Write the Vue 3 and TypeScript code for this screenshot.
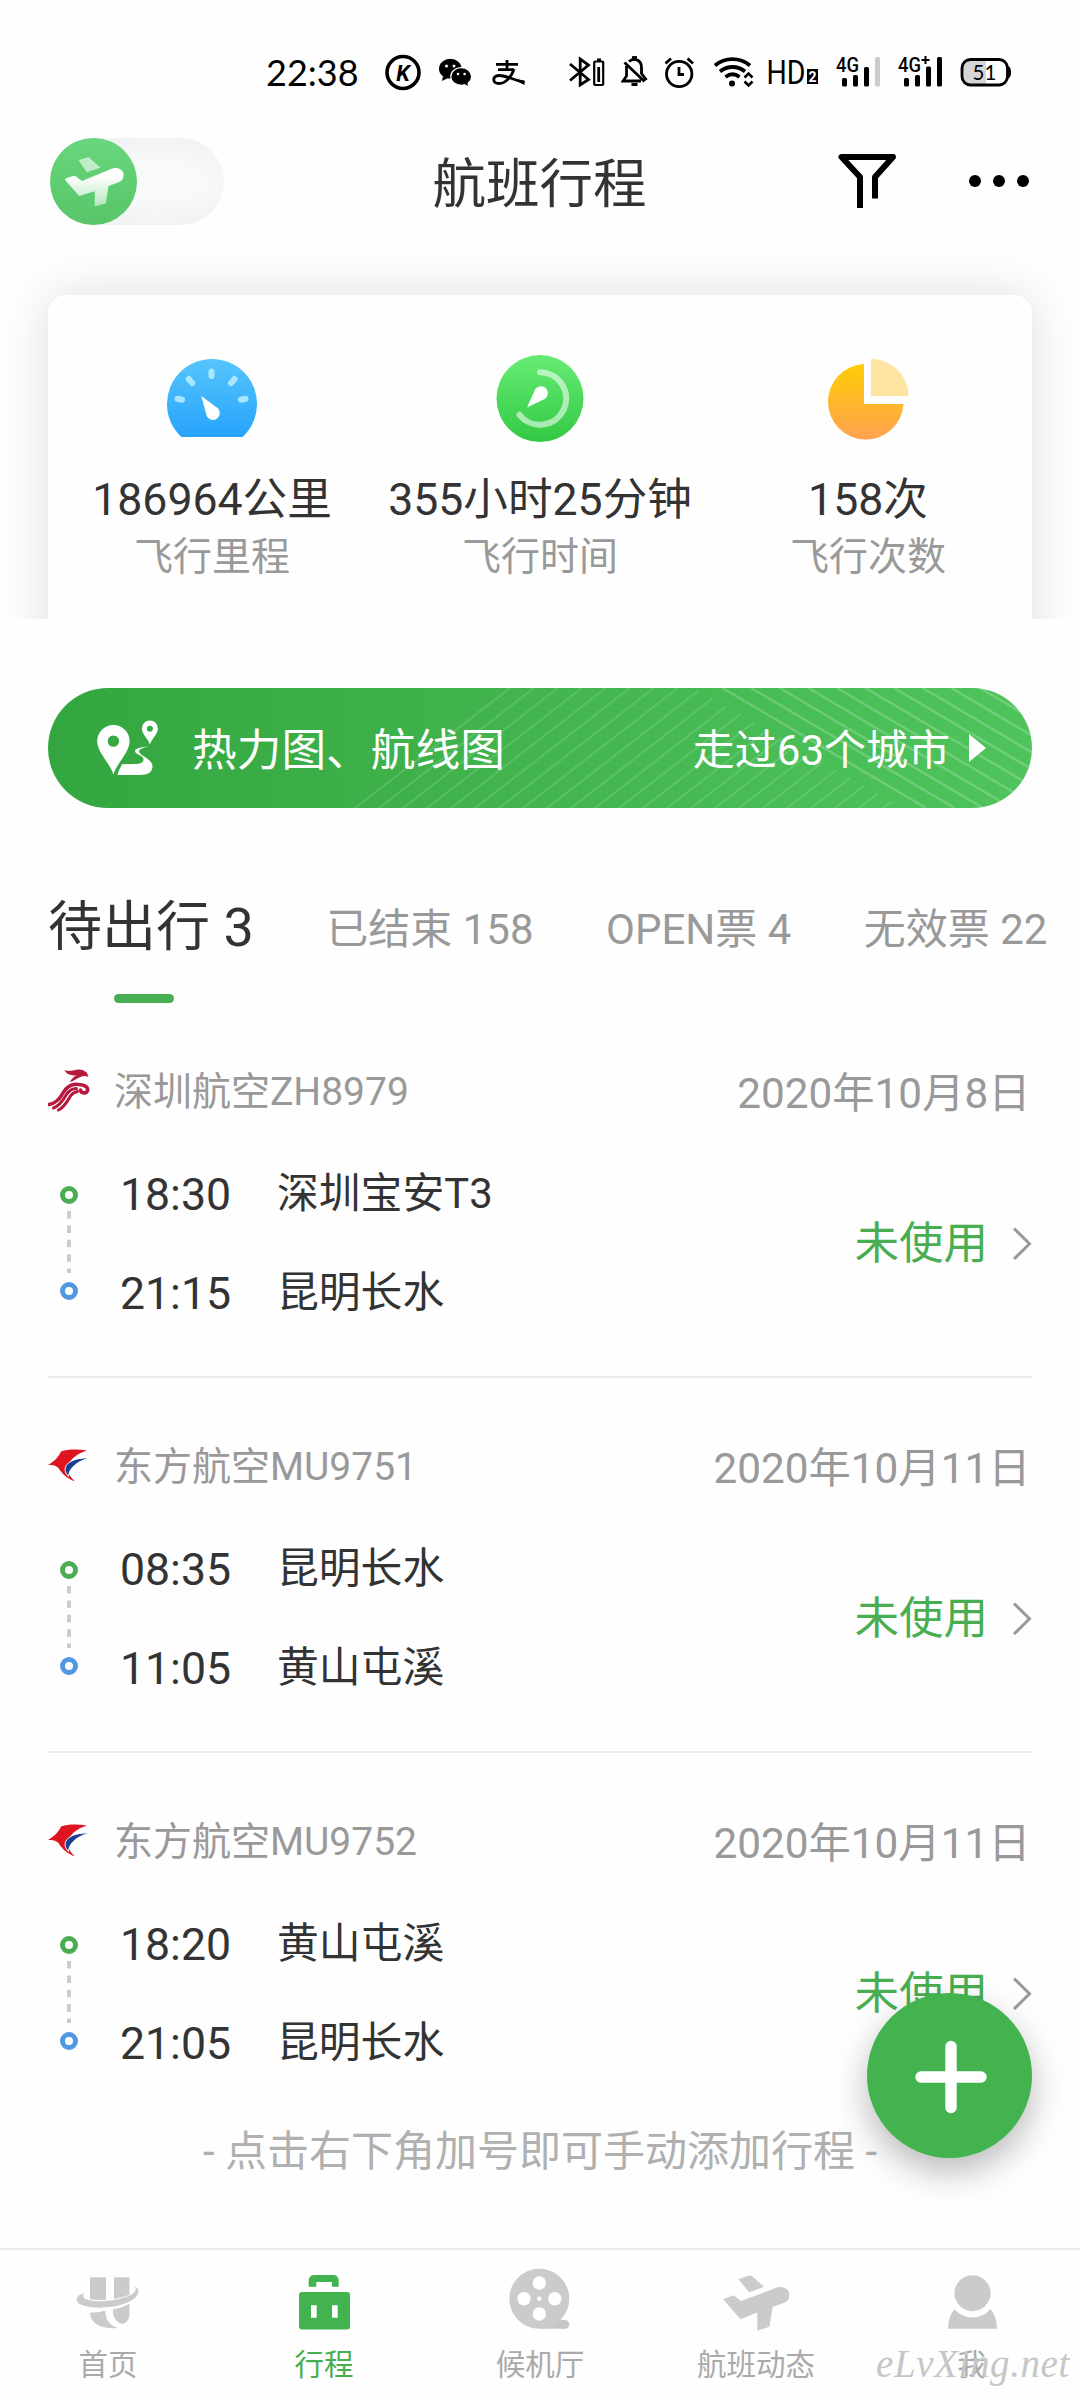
<script setup lang="ts">
interface Stat { kind: 'distance' | 'time' | 'count'; value: string; label: string }
interface Tab { name: string; count: number }
interface Stop { time: string; airport: string }
interface Flight { logo: 'zh' | 'mu'; title: string; date: string; from: Stop; to: Stop }
interface NavItem { id: string; label: string }

const stats: Stat[] = [
  { kind: 'distance', value: '186964公里', label: '飞行里程' },
  { kind: 'time', value: '355小时25分钟', label: '飞行时间' },
  { kind: 'count', value: '158次', label: '飞行次数' },
]

const tabs: Tab[] = [
  { name: '待出行', count: 3 },
  { name: '已结束', count: 158 },
  { name: 'OPEN票', count: 4 },
  { name: '无效票', count: 22 },
]

const flights: Flight[] = [
  {
    logo: 'zh', title: '深圳航空ZH8979', date: '2020年10月8日',
    from: { time: '18:30', airport: '深圳宝安T3' }, to: { time: '21:15', airport: '昆明长水' },
  },
  {
    logo: 'mu', title: '东方航空MU9751', date: '2020年10月11日',
    from: { time: '08:35', airport: '昆明长水' }, to: { time: '11:05', airport: '黄山屯溪' },
  },
  {
    logo: 'mu', title: '东方航空MU9752', date: '2020年10月11日',
    from: { time: '18:20', airport: '黄山屯溪' }, to: { time: '21:05', airport: '昆明长水' },
  },
]

const nav: NavItem[] = [
  { id: 'home', label: '首页' },
  { id: 'trip', label: '行程' },
  { id: 'lounge', label: '候机厅' },
  { id: 'status', label: '航班动态' },
  { id: 'me', label: '我' },
]

const risingLines = Array.from({ length: 24 }, (_, i) => 355 + i * 24)
const fallingLines = Array.from({ length: 11 }, (_, i) => 722.5 + i * 28.6)
</script>

<template>
  <div class="page">
    <div class="status">
      <span class="clock">22:38</span>
      <svg class="s-k" width="36" height="40" viewBox="385 52 36 40">
        <circle cx="403" cy="72.5" r="16" fill="none" stroke="#000" stroke-width="3.6" />
        <text x="403" y="80.5" text-anchor="middle" font-family="Roboto, sans-serif" font-size="22" font-weight="700" font-style="italic">K</text>
      </svg>
      <svg class="s-wx" width="34" height="40" viewBox="438 52 34 40">
        <path d="M443 76l-1 5 6-3z" />
        <ellipse cx="450.3" cy="68.8" rx="11.3" ry="10" />
        <ellipse cx="461.2" cy="76.5" rx="11" ry="9.4" fill="#fff" />
        <ellipse cx="461.2" cy="76.5" rx="9.8" ry="8.3" />
        <path d="M463 83l5 3-1-5z" />
        <g fill="#fff"><circle cx="446.5" cy="66" r="1.5" /><circle cx="454" cy="66" r="1.5" /><circle cx="458" cy="74" r="1.3" /><circle cx="464.6" cy="74" r="1.3" /></g>
      </svg>
      <svg class="s-ali" width="36" height="40" viewBox="490 52 36 40" fill="none" stroke="#000">
        <path d="M496 64.3h22M507 60v10M498 69.7h16" stroke-width="2.8" />
        <path d="M514 69c-2 7-8 14.500-15 14.500c-7 0-7-7.500 0-8 6-.3 15 4.500 25.500 7" stroke-width="2.800" />
        <path d="M512 78.500l12.500 2v4.500z" fill="#000" stroke="none" />
      </svg>
      <svg class="s-bt" width="36" height="40" viewBox="569 52 36 40" fill="none" stroke="#000" stroke-width="2.8">
        <path d="M570 64l18.500 15.500-8.300 5.500V59l8.300 6L570 80.500" />
        <rect x="594.2" y="61.500" width="9" height="23.500" rx="1" stroke-width="2.200" />
        <path d="M597 60h4M598.700 67v15" stroke-width="2.800" />
      </svg>
      <svg class="s-bell" width="27" height="40" viewBox="621 52 27 40" fill="none" stroke="#000" stroke-width="2.8">
        <path d="M629 61.500c4-3.800 12.500-2.500 12.500 6v6l5 6.500M626.500 66v10l-3.500 5h18M624.500 62.500l20 19" />
        <path d="M632 57.500h5" /><path d="M631.500 84.500h6" stroke-width="3" />
      </svg>
      <svg class="s-alarm" width="30" height="40" viewBox="664 52 30 40" fill="none" stroke="#000" stroke-width="2.8">
        <circle cx="679.200" cy="74" r="12.700" /><path d="M679 67v7.500h5M665.500 63.500l5.500-5M693 63.500l-5.500-5" />
      </svg>
      <svg class="s-wifi" width="42" height="40" viewBox="713 52 42 40" fill="none" stroke="#000" stroke-width="3.8">
        <path d="M715 65.500c10-8.500 25-8.500 35 0M720 71.500c7.500-6 17.500-6 25 0M725.500 77c4.500-3.500 9.500-3.500 14 0" />
        <circle cx="732" cy="83.500" r="3" fill="#000" stroke="none" />
        <path d="M744.500 77.500l4-4 4 4M744.500 81.500l4 4 4-4" stroke-width="2.500" />
      </svg>
      <svg class="s-hd" width="52" height="40" viewBox="767 52 52 40">
        <text x="766.500" y="84" font-family="Roboto, sans-serif" font-size="33.500" textLength="39" lengthAdjust="spacingAndGlyphs">HD</text>
        <rect x="807" y="69" width="11" height="15" />
        <text x="812.500" y="81.500" fill="#fff" text-anchor="middle" font-family="Roboto, sans-serif" font-size="14" font-weight="700">2</text>
      </svg>
      <svg class="s-sig" width="46" height="40" viewBox="835 52 46 40">
        <text x="836" y="72" font-family="Roboto, sans-serif" font-size="20.500" font-weight="500" textLength="23" lengthAdjust="spacingAndGlyphs">4G</text>
        <rect x="842" y="78" width="5" height="8.500" rx="1.500" /><rect x="853" y="75" width="5" height="11.500" rx="1.500" /><rect x="864" y="67" width="5" height="19.500" rx="1.500" /><rect x="875" y="57" width="5" height="29.500" rx="1.500" fill="#ccc" />
      </svg>
      <svg class="s-sig2" width="46" height="40" viewBox="897 52 46 40">
        <text x="898" y="72" font-family="Roboto, sans-serif" font-size="20.500" font-weight="500" textLength="23" lengthAdjust="spacingAndGlyphs">4G</text>
        <path d="M921.500 60h8M925.500 56v8" stroke="#000" stroke-width="2" />
        <rect x="904" y="78" width="5" height="8.500" rx="1.500" /><rect x="915" y="75" width="5" height="11.500" rx="1.500" /><rect x="926" y="66.500" width="5" height="20" rx="1.500" /><rect x="937" y="57" width="5" height="29.500" rx="1.500" />
      </svg>
      <svg class="s-bat" width="52" height="40" viewBox="960 52 52 40">
        <path d="M970 60.500h16v24h-16q-8 0-8-8v-8q0-8 8-8z" fill="#d5d5d5" />
        <rect x="962" y="59.500" width="45.500" height="25.500" rx="8.500" fill="none" stroke="#000" stroke-width="2.800" />
        <path d="M1008 66q3 1 3 6.300t-3 6.300z" />
        <text x="984.500" y="79.500" text-anchor="middle" font-family="Lato, sans-serif" font-size="20.500">51</text>
      </svg>
    </div>

    <header class="header">
      <div class="toggle">
        <div class="knob">
          <svg width="87" height="87" viewBox="50 137 87 87">
            <defs><linearGradient id="planeFill" x1="0" y1="0" x2="0" y2="1"><stop offset=".2" stop-color="#fff" /><stop offset="1" stop-color="#fff" stop-opacity=".55" /></linearGradient></defs>
            <path d="M78.600 159.300l9.900-3.300 12.100 10.700-13.800 4.600z" fill="#fff" fill-opacity=".6" />
            <path d="M65 179l.8-1.700 8.200-2.500 1.800.4 6.200 4.800 29-12c6-2.500 12 .5 12.500 5 .4 4-1.500 7-4 8l-11 4-2.500 16.500-1 1.200-10.300 2.600v-15l-15.500 4.700z" fill="url(#planeFill)" />
          </svg>
        </div>
      </div>
      <h1 class="title">航班行程</h1>
      <div class="actions">
        <svg width="60" height="60" viewBox="835 151 60 60" fill="none" stroke="#000" stroke-width="6" stroke-linejoin="round">
          <path d="M858 208v-31L839.500 157h51.500L873 177v21.500" />
        </svg>
        <svg width="62" height="14" viewBox="966 174 62 14"><circle cx="973" cy="181" r="6" /><circle cx="997" cy="181" r="6" /><circle cx="1021" cy="181" r="6" /></svg>
      </div>
    </header>

    <section class="summary">
      <div class="card">
        <div v-for="s in stats" :key="s.kind" class="stat">
          <svg v-if="s.kind === 'distance'" width="90" height="90" viewBox="167 354 90 90">
            <defs><linearGradient id="blue" x1="0" y1="0" x2="0" y2="1"><stop offset="0" stop-color="#56c5fc" /><stop offset="1" stop-color="#27a3fb" /></linearGradient></defs>
            <path d="M181.400 437A45 45 0 1 1 242.600 437z" fill="url(#blue)" />
            <path d="M211.500 371.500v4.500M188.700 379l3.500 4M234.500 379l-3.500 4M177.500 398.800l4.500 1M245.500 398.800l-4.500 1" stroke="#a9e6ff" stroke-width="6" stroke-linecap="round" />
            <path d="M201.300 396l15.500 11.500a6.800 6.800 0 1 1-10.600 6.500z" fill="#fff" />
          </svg>
          <svg v-else-if="s.kind === 'time'" width="90" height="90" viewBox="495 354 90 90">
            <defs><linearGradient id="green" x1="0" y1="0" x2="0" y2="1"><stop offset="0" stop-color="#66ec75" /><stop offset="1" stop-color="#33c943" /></linearGradient></defs>
            <circle cx="540" cy="398.600" r="43.500" fill="url(#green)" />
            <path d="M540 372.300a26.200 26.200 0 1 1-20.500 42.500" fill="none" stroke="#fff" stroke-opacity=".56" stroke-width="6" stroke-linecap="round" />
            <path d="M527 407.500l7-15.500a7 7 0 1 1 8.500 8z" fill="#fff" />
          </svg>
          <svg v-else width="90" height="90" viewBox="823 354 90 90">
            <defs><linearGradient id="amber" x1="0" y1="0" x2="0" y2="1"><stop offset="0" stop-color="#ffcd05" /><stop offset="1" stop-color="#ffa250" /></linearGradient></defs>
            <path d="M864 364v40h39.500A37.800 37.800 0 1 1 864 364z" fill="url(#amber)" />
            <path d="M871 358.700v37.600h37.700A38 38 0 0 0 871 358.700z" fill="#ffe5a3" />
          </svg>
          <div class="value">{{ s.value }}</div>
          <div class="label">{{ s.label }}</div>
        </div>
      </div>
    </section>

    <section class="banner">
      <svg class="pattern" width="984" height="120" viewBox="48 688 984 120" fill="none" stroke="#fff">
        <defs><clipPath id="leftZone"><path d="M48 688H695L902 808H48z" /></clipPath></defs>
        <g clip-path="url(#leftZone)" stroke-width="2.200" stroke-opacity=".13">
          <path v-for="x in risingLines" :key="x" :d="`M${x} 808l155-120`" />
        </g>
        <g stroke-width="2.400" stroke-opacity=".2">
          <path v-for="x in fallingLines" :key="x" :d="`M${x} 688l203.500 120`" />
        </g>
      </svg>
      <svg class="route" width="64" height="60" viewBox="96 718 64 60" fill="#fff">
        <path fill-rule="evenodd" d="M113.400 774.500c-3-11-16.200-22-16.200-33.300a16.200 16.200 0 0 1 32.400 0c0 11.300-13.200 22.300-16.200 33.300zM113.400 735.400a5.700 5.700 0 1 0 0 11.400 5.700 5.700 0 0 0 0-11.400z" />
        <path fill-rule="evenodd" d="M149.900 744.500c-1.500-5.500-8-10-8-16a8 8 0 0 1 16 0c0 6-6.500 10.500-8 16zM149.900 725.700a3 3 0 1 0 0 6 3 3 0 0 0 0-6z" />
        <path d="M149 746.500c-8 .3-14 2-14 4.500 0 3.500 9.500 4.500 8.500 9-.5 3-4 4-8 4l-13.500.3c-2 3.500-3.500 7-4.500 10.700h22c9 0 13-3.500 13-8.500 0-8-13.500-11-13.500-15 0-2.500 5-4 10-5z" />
      </svg>
      <span class="banner-title">热力图、航线图</span>
      <span class="cities">走过63个城市</span>
      <i class="play"></i>
    </section>

    <nav class="tabs">
      <span v-for="(t, i) in tabs" :key="t.name" :class="['tab', { active: i === 0 }]">{{ t.name }} {{ t.count }}</span>
    </nav>
    <div class="indicator"></div>

    <main class="list">
      <article v-for="f in flights" :key="f.title" class="flight">
        <div class="flight-head">
          <svg v-if="f.logo === 'zh'" class="logo" width="42" height="44" viewBox="49 1069 42 44">
            <g fill="none" stroke="#b5183c" stroke-linecap="round">
              <path d="M50 1104.500c7-1 11-6 14-11.500 4-7 9-9.500 16-8.500 6 .500 9.500 3 8.500 6-1 3.500-6.500 3-7-.5" stroke-width="3.600" />
              <path d="M54.500 1108c7-2.500 10-8.500 13-13.500 2.500-4 5.500-6 10-6" stroke-width="3" />
              <path d="M59.500 1110c6-3 9-9 12-14 2-3 4-4 7-4.500" stroke-width="3" />
            </g>
            <path d="M65.500 1070c5 2.500 10-.7 15-.6 4 .2 5.500 2.200 7.500 3.300l1.500 4.300c-2.500-1.300-5-1-7.500-.2-4 1.300-7 4.200-11 5.200 1-3 3.500-5 6.500-6.800-5 .8-10.500-1-12-5.200z" fill="#b5183c" />
          </svg>
          <svg v-else class="logo" width="42" height="44" viewBox="48 1443 42 44">
            <path d="M87 1449.500c-9-1.500-19-1.500-26 1-2 4.500-6 9.500-13 13.500 5-.5 8 .5 10.500 3 3 5 8 10.500 16.500 13.500-5-5-7.500-9-7-13.500 1-8 8-14 19-17.500z" fill="#de1420" />
            <path d="M89.500 1457c-9-.5-18.500 1.500-22.500 6.500-3 3.500-2.500 8 1.500 12 .5-8 8-15 21-18.500z" fill="#1c3f94" stroke="#fff" stroke-width="1" />
          </svg>
          <span class="flight-name">{{ f.title }}</span>
          <span class="date">{{ f.date }}</span>
        </div>
        <div class="flight-body">
          <svg class="track" width="18" height="198" viewBox="60 1145 18 198" fill="none">
            <circle cx="69" cy="1195" r="6.500" stroke="#4aad54" stroke-width="5" />
            <path d="M69 1211v62" stroke="#ccc" stroke-width="4" stroke-dasharray="7.500 6.900" />
            <circle cx="69" cy="1291" r="6.500" stroke="#5198e2" stroke-width="5" />
          </svg>
          <div class="stops">
            <div class="stop"><span class="time">{{ f.from.time }}</span><span class="airport">{{ f.from.airport }}</span></div>
            <div class="stop"><span class="time">{{ f.to.time }}</span><span class="airport">{{ f.to.airport }}</span></div>
          </div>
          <span class="state">未使用</span>
          <svg class="chevron" width="20" height="34" viewBox="1013 1226 20 34" fill="none" stroke="#999" stroke-width="3"><path d="M1015 1227.500l15.500 15.300L1015 1258" /></svg>
        </div>
      </article>
    </main>
    <p class="hint">- 点击右下角加号即可手动添加行程 -</p>

    <footer class="bottom">
      <div v-for="n in nav" :key="n.id" :class="['nav-item', { on: n.id === 'trip' }]">
        <svg v-if="n.id === 'home'" width="72" height="64" viewBox="72 2267 72 64">
          <path d="M90 2277.300h16v22.500q-8 .8-16-.5zM114 2277.300h15.500v17.500q-7 3.200-15.500 4.200z" />
          <path d="M84.500 2293.300c-10 2-10.500 9-2 12 18 6 54 0 56-13.500.3-3-1.500-4.500-4-5.300 2.500 3 1 6-5 9-13 6-35 7.500-44 3.500-3-1.500-3-4-1-5.700z" />
          <path d="M90 2312.800q8 0 15.500-2.100c-.5 7 3 14 12 17.300-14 1.500-27-3-27.500-15.200zM113 2309.500q9-1.500 16.500-6v10.500q-.5 9-7.500 10c-6-2-9.500-7-9-14.500z" />
        </svg>
        <svg v-else-if="n.id === 'trip'" width="72" height="64" viewBox="288 2267 72 64">
          <path d="M308.700 2286.700v-6q0-5.700 6-5.700h18q6 0 6 5.700v6H332v-4.700h-15.700v4.700z" />
          <path fill-rule="evenodd" d="M302 2292h45q3 0 3 3v31.500q0 3-3 3h-45q-3 0-3-3V2295q0-3 3-3zM311 2305.300v12.400h5.700v-12.400zM332 2305.300v12.400h5.700v-12.400z" />
        </svg>
        <svg v-else-if="n.id === 'lounge'" width="72" height="64" viewBox="504 2267 72 64">
          <path d="M540 2320h25a4.300 4.300 0 0 1 0 8.700h-25z" fill="#c6c6ca" />
          <circle cx="539.300" cy="2298.700" r="30" />
          <g fill="#fff"><circle cx="524" cy="2298.700" r="6.700" /><circle cx="554.800" cy="2298.700" r="6.700" /><circle cx="539.300" cy="2283" r="6.700" /><circle cx="539.300" cy="2314" r="6.700" /><circle cx="539.300" cy="2298.700" r="2.300" /></g>
        </svg>
        <svg v-else-if="n.id === 'status'" width="72" height="64" viewBox="720 2267 72 64">
          <path d="M738.300 2279.300l9.700-3.300q2.500-1 4 .3l12 10.400-14.600 5.600z" />
          <path d="M723.200 2299.300l10.300-4 7.500 5.700 36-13.500c6-2 12 1.500 12.300 6.500.2 4.500-1.500 7-4.500 8.500l-12 4.500-3.500 19.700-12 4v-18.200l-16.800 6.800z" />
        </svg>
        <svg v-else width="72" height="64" viewBox="936 2267 72 64">
          <circle cx="972.500" cy="2293.200" r="18" />
          <path d="M954.500 2309q7 8.500 18 8.500t18-8.500q6.500 8 6.500 19.700h-49q0-11.700 6.500-19.700z" />
        </svg>
        <span>{{ n.label }}</span>
      </div>
      <span class="watermark">eLvXing.net</span>
    </footer>

    <button class="fab" aria-label="添加行程">
      <svg width="74" height="74" viewBox="0 0 74 74"><path d="M37 6.500v61M7 37h60" stroke="#fff" stroke-width="11.400" stroke-linecap="round" /></svg>
    </button>
  </div>
</template>

<style>
body { margin: 0; background: #fefefe; }
</style>

<style scoped>
.page {
  position: relative;
  display: flex;
  flex-direction: column;
  width: 1080px;
  height: 2400px;
  overflow: hidden;
  background: #fefefe;
  color: #333;
  font-family: Roboto, "Noto Sans CJK SC", sans-serif;
}
svg { display: block; flex: none; }
.status { display: flex; align-items: center; height: 70px; padding: 37px 0 3px 266px; color: #000; }
.clock { width: 119px; font: 36px/40px Lato, sans-serif; }
.s-wx { margin-left: 17px; }
.s-ali { margin-left: 18px; }
.s-bt { margin-left: 43px; }
.s-bell { margin-left: 16px; }
.s-alarm { margin-left: 16px; }
.s-wifi { margin-left: 19px; }
.s-hd { margin-left: 12px; }
.s-sig { margin-left: 16px; }
.s-sig2 { margin-left: 16px; }
.s-bat { margin-left: 17px; }

.header { display: flex; align-items: center; justify-content: space-between; height: 142px; padding: 0 50px 0 50px; }
.toggle { width: 174px; height: 87px; border-radius: 44px; background: radial-gradient(ellipse at 60% 50%, #f8f9fa 30%, #eceef0 100%); }
.knob { width: 87px; height: 87px; border-radius: 50%; background: linear-gradient(#68d67c, #57c568); overflow: hidden; }
.title { margin: 0 0 0 20px; padding-top: 8px; width: 216px; font-size: 53.500px; font-weight: 400; line-height: 64px; white-space: nowrap; }
.actions { display: flex; align-items: center; gap: 71px; }

.summary { height: 324px; padding: 43px 48px 0; overflow: hidden; }
.card { display: flex; height: 380px; border-radius: 18px; background: #fefefe; box-shadow: 0 0 50px rgba(0, 0, 0, .13); }
.stat { flex: 1; display: flex; flex-direction: column; align-items: center; padding-top: 59px; }
.value { margin-top: 28.500px; font-size: 44.600px; line-height: 54px; white-space: nowrap; }
.label { margin-top: 6px; font-size: 39px; line-height: 48px; color: #999; }

.banner { position: relative; display: flex; align-items: center; height: 120px; margin: 69px 48px 0; padding: 0 46px 0 48px; box-sizing: border-box; border-radius: 60px; overflow: hidden; background: linear-gradient(90deg, #33a63f, #42b54e 50%, #4fc45d); color: #fff; }
.pattern { position: absolute; left: 0; top: 0; }
.route { position: relative; }
.banner-title { position: relative; margin-left: 32px; padding-top: 6px; font-size: 44.700px; line-height: 60px; }
.cities { position: relative; margin-left: auto; padding-top: 5px; font-size: 42px; line-height: 60px; }
.play { position: relative; margin-left: 19px; border-left: 17px solid #fff; border-top: 14.500px solid transparent; border-bottom: 14.500px solid transparent; }

.tabs { display: flex; align-items: center; gap: 72.500px; height: 60px; margin: 90px 0 0 48px; white-space: nowrap; }
.tab { padding-top: 4px; font-size: 42px; line-height: 56px; color: #999; }
.tab.active { padding-top: 0; font-size: 54px; color: #333; }
.indicator { width: 60px; height: 9px; margin: 36px 0 0 114px; border-radius: 5px; background: #48ae51; }

.list { padding: 0 48px; }
.flight { padding: 63px 0 33px; border-bottom: 2px solid #ececec; }
.flight:last-child { padding-bottom: 0; border-bottom: 0; }
.flight-head { display: flex; align-items: center; height: 50px; color: #999; }
.flight-name { margin-left: 24px; padding-top: 2px; font-size: 39px; line-height: 50px; }
.date { margin-left: auto; padding: 6px 1.500px 0 0; font-size: 42.300px; line-height: 50px; }
.flight-body { display: flex; align-items: center; height: 198px; margin-top: 29px; padding-left: 12px; }
.stops { margin-left: 42px; }
.stop { display: flex; align-items: center; height: 99px; }
.time { width: 157px; font-size: 44.600px; line-height: 60px; }
.airport { padding-bottom: 2px; font-size: 41.800px; line-height: 60px; }
.state { margin-left: auto; font-size: 44.500px; line-height: 60px; color: #48ae51; }
.chevron { margin-left: 24px; }

.hint { margin: 34.500px 0 0; text-align: center; font-size: 42px; line-height: 48px; color: #b0b0b0; }

.bottom { position: relative; display: flex; height: 133px; margin-top: auto; padding-top: 17px; border-top: 2px solid #ececec; }
.nav-item { flex: 1; display: flex; flex-direction: column; align-items: center; color: #aaa; fill: #cbcbcb; font-size: 29.500px; line-height: 36px; }
.nav-item span { margin-top: 16px; }
.nav-item.on { color: #48ae51; fill: #43b34f; }
.watermark { position: absolute; left: 876px; top: 92px; font: italic 39px/44px "Liberation Serif", serif; letter-spacing: .6px; color: #c6c6c6; }

.fab { position: absolute; left: 867px; top: 1993px; display: flex; align-items: center; justify-content: center; width: 165px; height: 165px; padding: 3px 0 0 2px; box-sizing: border-box; border: 0; border-radius: 50%; background: #43b34f; box-shadow: 0 14px 34px rgba(0, 0, 0, .27); }
</style>
